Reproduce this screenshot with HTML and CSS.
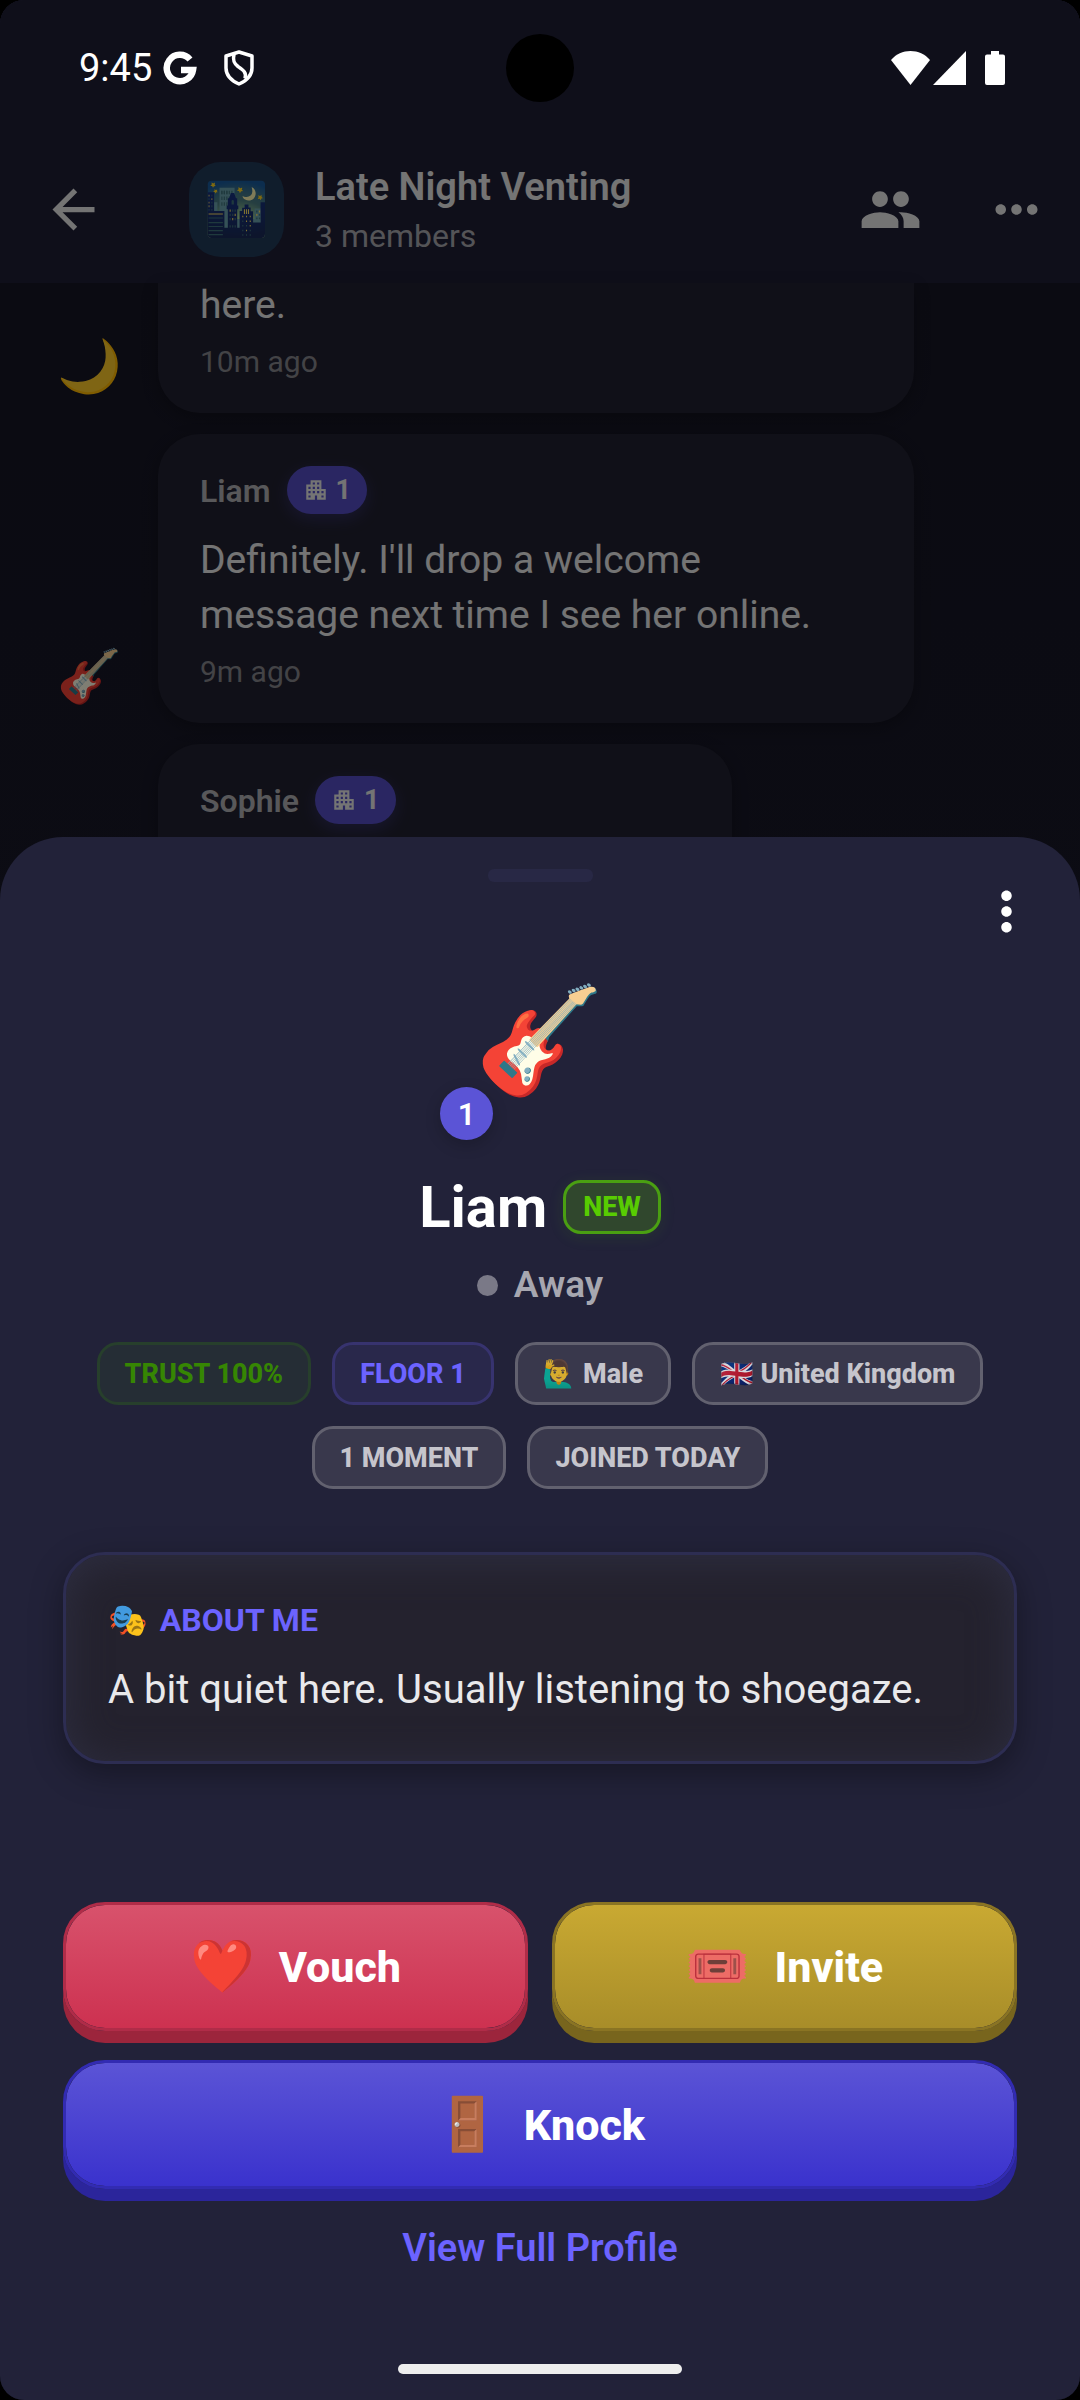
FILE: index.html
```html
<!DOCTYPE html>
<html lang="en">
<head>
  <meta charset="UTF-8">
  <meta name="viewport" content="width=device-width, initial-scale=1">
  <title>Late Night Venting</title>
  <link rel="stylesheet" href="styles.css">
</head>
<body>

<div class="screen">

  <div class="room">
    <header class="room-header">
      <button class="icon-button back" aria-label="Back">
        <svg class="icon" viewBox="0 0 24 24"><path d="M20 11H7.83l5.59-5.59L12 4l-8 8 8 8 1.41-1.41L7.83 13H20v-2z"/></svg>
      </button>
      <div class="room-avatar">🌃</div>
      <div class="room-info">
        <h1 class="room-title">Late Night Venting</h1>
        <p class="room-members">3 members</p>
      </div>
      <button class="icon-button" aria-label="Members">
        <svg class="icon" viewBox="0 0 24 24"><path d="M16 11c1.66 0 2.99-1.34 2.99-3S17.66 5 16 5s-3 1.34-3 3 1.34 3 3 3zm-8 0c1.66 0 2.99-1.34 2.99-3S9.66 5 8 5 5 6.34 5 8s1.34 3 3 3zm0 2c-2.33 0-7 1.17-7 3.5V19h14v-2.500c0-2.330-4.670-3.500-7-3.500zm8 0c-.29 0-.62.020-.97.050 1.160.840 1.970 1.970 1.970 3.450V19h6v-2.500c0-2.330-4.670-3.500-7-3.500z"/></svg>
      </button>
      <button class="icon-button" aria-label="Room options">
        <svg class="icon" viewBox="0 0 24 24"><path d="M6 10c-1.100 0-2 .9-2 2s.9 2 2 2 2-.9 2-2-.9-2-2-2zm12 0c-1.100 0-2 .9-2 2s.9 2 2 2 2-.9 2-2-.9-2-2-2zm-6 0c-1.100 0-2 .9-2 2s.9 2 2 2 2-.9 2-2-.9-2-2-2z"/></svg>
      </button>
    </header>

    <main class="messages">
      <article class="message">
        <div class="message-avatar">🌙</div>
        <div class="bubble bubble-cut">
          <p class="message-text">here.</p>
          <time class="message-time">10m ago</time>
        </div>
      </article>

      <article class="message">
        <div class="message-avatar">🎸</div>
        <div class="bubble">
          <div class="message-head">
            <span class="message-name">Liam</span>
            <span class="floor-badge">
              <svg class="floor-icon" viewBox="0 0 24 24"><path d="M17 11V3H7v4H3v14h8v-4h2v4h8V11h-4zM7 19H5v-2h2v2zm0-4H5v-2h2v2zm0-4H5V9h2v2zm4 4H9v-2h2v2zm0-4H9V9h2v2zm0-4H9V5h2v2zm4 8h-2v-2h2v2zm0-4h-2V9h2v2zm0-4h-2V5h2v2zm4 12h-2v-2h2v2zm0-4h-2v-2h2v2z"/></svg>
              1
            </span>
          </div>
          <p class="message-text">Definitely. I'll drop a welcome<br>message next time I see her online.</p>
          <time class="message-time">9m ago</time>
        </div>
      </article>

      <article class="message">
        <div class="message-avatar"></div>
        <div class="bubble bubble-short">
          <div class="message-head">
            <span class="message-name">Sophie</span>
            <span class="floor-badge">
              <svg class="floor-icon" viewBox="0 0 24 24"><path d="M17 11V3H7v4H3v14h8v-4h2v4h8V11h-4zM7 19H5v-2h2v2zm0-4H5v-2h2v2zm0-4H5V9h2v2zm4 4H9v-2h2v2zm0-4H9V9h2v2zm0-4H9V5h2v2zm4 8h-2v-2h2v2zm0-4h-2V9h2v2zm0-4h-2V5h2v2zm4 12h-2v-2h2v2zm0-4h-2v-2h2v2z"/></svg>
              1
            </span>
          </div>
        </div>
      </article>
    </main>
  </div>

  <div class="scrim"></div>

  <div class="status-bar">
    <div class="status-left">
      <span class="clock">9:45</span>
      <svg class="status-g" viewBox="0 0 34 34"><path d="M27 8.500A13.200 13.200 0 1 0 30 19H18" fill="none" stroke="#fff" stroke-width="6.500"/></svg>
      <svg class="status-shield" viewBox="0 0 30 36"><g fill="none" stroke="#fff" stroke-width="3.500" stroke-linejoin="round"><path d="M15 2 28 6v12c0 7-5 12.500-13 16C7 30.500 2 25 2 18V6z"/><path d="M10 4.500c-1.500 6 0 9 4 12 5 3.500 9 6 7 12"/></g></svg>
    </div>
    <div class="camera"></div>
    <div class="status-right">
      <svg class="status-wifi" viewBox="0 0 39 34"><path d="M0 9C5 3 12 0 19.500 0S34 3 39 9L19.500 34z"/></svg>
      <svg class="status-signal" viewBox="0 0 33 34"><path d="M33 0v34H0z"/></svg>
      <svg class="status-battery" viewBox="0 0 20 34"><path d="M6 0h8v3.500h4a2 2 0 0 1 2 2V32a2 2 0 0 1-2 2H2a2 2 0 0 1-2-2V5.500a2 2 0 0 1 2-2h4z"/></svg>
    </div>
  </div>

  <section class="sheet">
    <div class="sheet-handle"></div>
    <button class="icon-button sheet-menu" aria-label="Profile options">
      <svg class="icon" viewBox="0 0 24 24"><path d="M12 8c1.100 0 2-.9 2-2s-.9-2-2-2-2 .9-2 2 .9 2 2 2zm0 2c-1.100 0-2 .9-2 2s.9 2 2 2 2-.9 2-2-.9-2-2-2zm0 6c-1.100 0-2 .9-2 2s.9 2 2 2 2-.9 2-2-.9-2-2-2z"/></svg>
    </button>

    <div class="profile-avatar">
      🎸
      <span class="profile-floor">1</span>
    </div>

    <div class="profile-name-row">
      <h2 class="profile-name">Liam</h2>
      <span class="new-badge">NEW</span>
    </div>

    <div class="presence">
      <span class="presence-dot"></span>
      Away
    </div>

    <div class="chips">
      <span class="chip chip-trust">TRUST 100%</span>
      <span class="chip chip-floor">FLOOR 1</span>
      <span class="chip"><span class="chip-emoji">🙋‍♂️</span> Male</span>
      <span class="chip"><span class="chip-emoji">🇬🇧</span> United Kingdom</span>
      <span class="chip">1 MOMENT</span>
      <span class="chip">JOINED TODAY</span>
    </div>

    <div class="about">
      <h3 class="about-title"><span class="about-emoji">🎭</span>ABOUT ME</h3>
      <p class="about-text">A bit quiet here. Usually listening to shoegaze.</p>
    </div>

    <div class="actions">
      <button class="action vouch"><span class="action-emoji">❤️</span>Vouch</button>
      <button class="action invite"><span class="action-emoji">🎟️</span>Invite</button>
      <button class="action knock"><span class="action-emoji">🚪</span>Knock</button>
    </div>

    <a class="profile-link" href="#">View Full Profile</a>
    <div class="home-bar"></div>
  </section>

</div>

</body>
</html>
```
FILE: styles.css
```css
* {
  box-sizing: border-box;
  margin: 0;
  padding: 0;
}

body {
  background: #000;
  font-family: Roboto, "Noto Color Emoji", sans-serif;
  color: #fff;
}

button {
  font-family: inherit;
  border: none;
  background: none;
  color: inherit;
  cursor: pointer;
}

.screen {
  position: relative;
  min-height: 100vh;
  overflow: hidden;
  border-radius: 24px;
  background: #161624;
}

.icon {
  display: block;
  width: 63px;
  height: 63px;
  fill: currentColor;
}

/* room behind the sheet */

.room {
  color: #e8e8e8;
}

.room-header {
  display: flex;
  align-items: center;
  height: 283px;
  padding: 136px 32px 0 42px;
  background: #1e1e34;
}

.room-header .icon-button + .icon-button {
  margin-left: 63px;
}

.back {
  margin-right: 84px;
}

.room-avatar {
  display: flex;
  align-items: center;
  justify-content: center;
  width: 95px;
  height: 95px;
  border-radius: 32px;
  background: #213a58;
  font-size: 52px;
}

.room-info {
  flex: 1;
  margin-left: 31px;
}

.room-title {
  padding-top: 4px;
  font-size: 38px;
  font-weight: 600;
  line-height: 48px;
}

.room-members {
  font-size: 32px;
  line-height: 50px;
  color: #a8a8ae;
}

.messages {
  display: flex;
  flex-direction: column;
  gap: 21px;
  padding: 0 42px;
  background: linear-gradient(#161624, #181828);
}

.message {
  display: flex;
  align-items: flex-end;
  gap: 21px;
}

.message-avatar {
  display: flex;
  align-items: center;
  justify-content: center;
  width: 95px;
  height: 94px;
  font-size: 52px;
}

.bubble {
  width: 756px;
  max-width: 76%;
  padding: 32px 42px 34px;
  border-radius: 42px;
  background: #212130;
  box-shadow: 0 5px 16px rgba(0, 0, 0, 0.25);
}

.bubble-cut {
  padding-top: 0;
  border-top-left-radius: 0;
  border-top-right-radius: 0;
}

.bubble-cut .message-text {
  margin-top: -5px;
}

.bubble-short {
  width: 574px;
  min-height: 200px;
}

.message-head {
  display: flex;
  align-items: center;
  gap: 16px;
  margin-bottom: 19px;
}

.message-name {
  padding-top: 2px;
  font-size: 32px;
  font-weight: 600;
  color: #b0b0b4;
}

.floor-badge {
  display: flex;
  align-items: center;
  gap: 7px;
  height: 48px;
  padding: 0 16px;
  border-radius: 24px;
  background: #544dc4;
  box-shadow: 0 5px 16px rgba(84, 77, 196, 0.3);
  font-size: 27px;
  font-weight: 700;
}

.floor-icon {
  width: 26px;
  height: 26px;
  fill: currentColor;
}

.message-text {
  font-size: 39px;
  line-height: 55px;
}

.message-time {
  display: block;
  margin-top: 12px;
  font-size: 30px;
  line-height: 34px;
  color: #86868c;
}

.scrim {
  position: absolute;
  inset: 0;
  background: rgba(0, 0, 0, 0.5);
}

/* status bar */

.status-bar {
  position: absolute;
  inset: 0 0 auto 0;
  display: grid;
  grid-template-columns: 1fr auto 1fr;
  align-items: center;
  height: 136px;
  padding: 0 75px;
  fill: #fff;
}

.status-left,
.status-right {
  display: flex;
  align-items: center;
}

.status-left {
  padding-left: 4px;
}

.clock {
  font-size: 38px;
}

.status-g {
  width: 34px;
  height: 34px;
  margin: 0 27px 0 11px;
}

.status-shield {
  width: 30px;
  height: 36px;
}

.camera {
  width: 68px;
  height: 68px;
  border-radius: 50%;
  background: #000;
}

.status-right {
  justify-content: flex-end;
}

.status-wifi {
  width: 39px;
  height: 34px;
}

.status-signal {
  width: 33px;
  height: 34px;
  margin: 0 19px 0 3px;
}

.status-battery {
  width: 20px;
  height: 34px;
}

/* profile sheet */

.sheet {
  position: absolute;
  inset: auto 0 0 0;
  display: flex;
  flex-direction: column;
  align-items: center;
  padding: 32px 63px 26px;
  border-radius: 63px 63px 0 0;
  background: #222239;
}

.sheet-handle {
  width: 105px;
  height: 13px;
  border-radius: 6px;
  background: #282845;
}

.sheet-menu {
  position: absolute;
  top: 43px;
  right: 42px;
}

.profile-avatar {
  position: relative;
  display: flex;
  align-items: center;
  justify-content: center;
  width: 210px;
  height: 210px;
  margin-top: 53px;
  font-size: 104px;
}

.profile-floor {
  position: absolute;
  left: 5px;
  bottom: 5px;
  width: 53px;
  height: 53px;
  border-radius: 50%;
  background: #5b54d6;
  box-shadow: 0 5px 16px rgba(0, 0, 0, 0.2);
  font-size: 31px;
  font-weight: 600;
  line-height: 55px;
  text-align: center;
}

.profile-name-row {
  display: flex;
  align-items: center;
  gap: 16px;
  margin-top: 28px;
}

.profile-name {
  font-size: 58px;
  font-weight: 700;
  line-height: 68px;
}

.new-badge {
  padding: 0 17px;
  border: 3px solid #4a9f12;
  border-radius: 18px;
  background: #30472d;
  box-shadow: 0 3px 16px rgba(88, 204, 2, 0.1);
  color: #58cc02;
  font-size: 27px;
  font-weight: 800;
  line-height: 48px;
}

.presence {
  display: flex;
  align-items: center;
  gap: 16px;
  margin-top: 22px;
  font-size: 37px;
  font-weight: 600;
  line-height: 44px;
  color: #a7a7b0;
}

.presence-dot {
  width: 21px;
  height: 21px;
  border-radius: 50%;
  background: #7a7987;
}

.chips {
  display: flex;
  flex-wrap: wrap;
  justify-content: center;
  gap: 21px;
  margin-top: 35px;
}

.chip {
  padding: 2px 25px 0;
  border: 3px solid #62616f;
  border-radius: 21px;
  background: #39384c;
  color: #c6c5cc;
  font-size: 27px;
  font-weight: 800;
  line-height: 55px;
  white-space: nowrap;
}

.chip-trust {
  border-color: #273f2c;
  background: #252d35;
  color: #368603;
}

.chip-floor {
  border-color: #37336f;
  background: #29284b;
  color: #6c63ff;
}

.chip-emoji {
  opacity: 0.8;
}

.about {
  align-self: stretch;
  margin-top: 63px;
  padding: 44px 42px 42px;
  border: 3px solid #2d2d52;
  border-radius: 42px;
  background: #24222e;
  box-shadow: 0 10px 32px rgba(0, 0, 0, 0.35), inset 0 5px 42px #2e2e41;
}

.about-title {
  font-size: 32px;
  font-weight: 700;
  line-height: 42px;
  color: #6c63ff;
}

.about-emoji {
  margin-right: 12px;
}

.about-text {
  margin-top: 20px;
  font-size: 40px;
  line-height: 58px;
  color: #e9e9eb;
}

.actions {
  display: grid;
  grid-template-columns: 1fr 1fr;
  align-self: stretch;
  gap: 29px 24px;
  margin-top: 138px;
}

.action {
  display: flex;
  align-items: center;
  justify-content: center;
  gap: 24px;
  height: 129px;
  border: 3px solid;
  border-radius: 42px;
  font-size: 43px;
  font-weight: 800;
}

.action-emoji {
  font-size: 52px;
}

.vouch {
  border-color: #b02c48;
  background: linear-gradient(#d8526c, #cd3150) padding-box;
  box-shadow: 0 12px #9c253c;
}

.invite {
  border-color: #8a7423;
  background: linear-gradient(#c9a932, #a88d29) padding-box;
  box-shadow: 0 12px #78651d;
}

.knock {
  grid-column: 1 / -1;
  border-color: #322bb2;
  background: linear-gradient(#5b54d6, #3a32cd) padding-box;
  box-shadow: 0 12px #2b259b;
}

.profile-link {
  margin-top: 37px;
  color: #6c63ff;
  font-size: 38px;
  font-weight: 600;
  line-height: 44px;
  text-decoration: none;
}

.home-bar {
  width: 284px;
  height: 10px;
  margin-top: 94px;
  border-radius: 5px;
  background: #eee;
}
```
